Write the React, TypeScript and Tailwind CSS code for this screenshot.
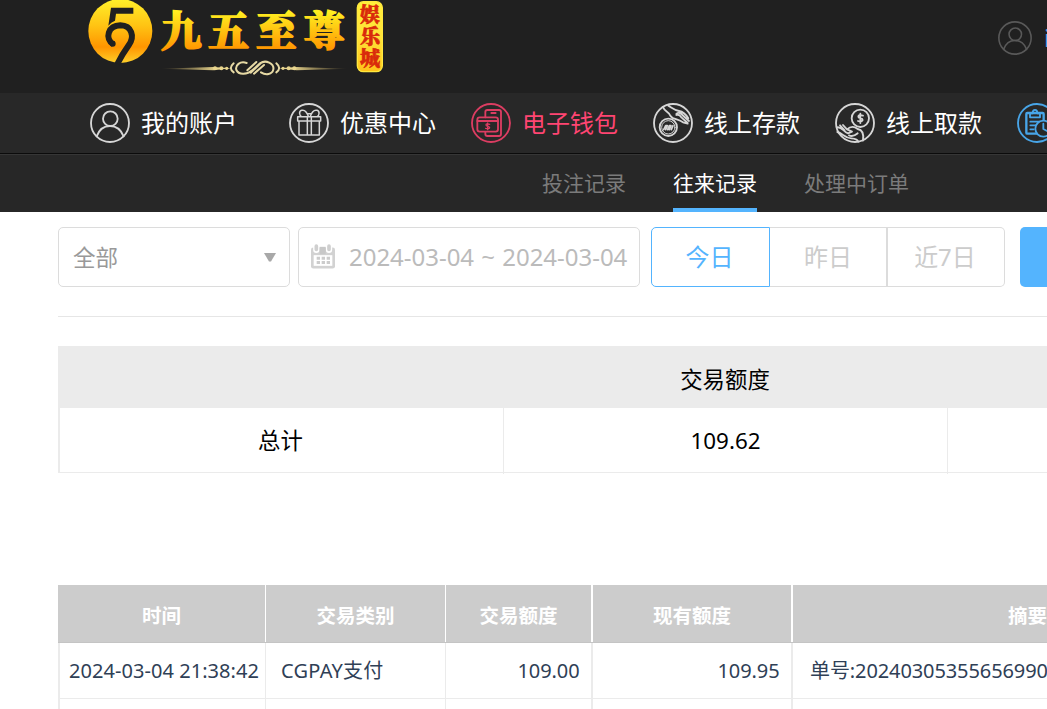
import React from "react";

const cjk = "font-['Noto_Sans','Noto_Sans_CJK_SC',sans-serif]";

type IconProps = { className?: string };

function Glyph({ className = "", children }: IconProps & { children: React.ReactNode }) {
  return (
    <svg
      viewBox="0 0 120 120"
      className={`shrink-0 ${className}`}
      fill="none"
      stroke="currentColor"
      strokeWidth="5.5"
      strokeLinecap="round"
      strokeLinejoin="round"
    >
      <circle cx="60" cy="60" r="57" />
      {children}
    </svg>
  );
}

const UserIcon = ({ className }: IconProps) => (
  <Glyph className={className}>
    <circle cx="61" cy="47" r="22" />
    <path d="M20 100 C28 78 43 69 60 69 C77 69 92 78 101 100" />
  </Glyph>
);

const GiftIcon = ({ className }: IconProps) => (
  <Glyph className={className}>
    <g strokeWidth="4.5">
      <path d="M26 41H95V54H26Z M30 54V96H91V54 M55 41V96 M67 41V96" />
      <path d="M58 40C54 28 46 20 38 22C28 25 32 38 37 40 M64 40C68 28 76 20 84 22C94 25 90 38 85 40 M55 32H67" />
    </g>
  </Glyph>
);

const WalletIcon = ({ className }: IconProps) => (
  <Glyph className={className}>
    <path d="M43 43V27Q43 21 49 21H84Q90 21 90 27V93Q90 99 84 99H49Q43 99 43 93V88 M61 30H74" />
    <rect x="19" y="43" width="62" height="43" rx="7" />
    <path d="M19 54H81" />
    <path strokeWidth="4" d="M56 64Q45 60 45 66C45 72 56 68 56 74Q55 79 44 76 M50 60V80" />
  </Glyph>
);

const DepositIcon = ({ className }: IconProps) => (
  <Glyph className={className}>
    <circle cx="46" cy="73" r="26" />
    <circle cx="46" cy="73" r="20" strokeWidth="3" />
    <path d="M32 80L38 68H43L38 80M44 80L49 68H54L49 80M55 80L60 68" strokeWidth="5" />
    <path d="M30 12C35 27 48 25 52 38C60 51 76 47 90 58L104 62M46 8C58 15 66 22 78 24C90 26 100 36 106 46M70 33C76 27 84 30 88 36L108 54M70 36C76 34 82 38 86 44L104 60" />
  </Glyph>
);

const WithdrawIcon = ({ className }: IconProps) => (
  <Glyph className={className}>
    <circle cx="76" cy="46" r="26" />
    <path d="M84 38Q70 34 70 41C70 47 83 44 83 51Q81 58 69 54 M76 32V60" />
    <path d="M6 73C23 71 24 86 39 91L51 86L36 79C47 69 57 69 68 78C79 80 88 87 84 113M15 67L29 82M24 66L36 79M7 87C23 91 29 105 49 106C60 107 68 108 70 116M42 97C54 103 63 95 68 91" />
  </Glyph>
);

const ReportIcon = ({ className }: IconProps) => (
  <Glyph className={className}>
    <rect x="28" y="30" width="52" height="62" rx="3" strokeWidth="7" />
    <path d="M39 43V31H47C47 17 61 17 61 31H69V43Z M40 56H68M40 67H58M40 79H50" />
    <circle cx="79" cy="77" r="24" fill="#282828" />
    <path d="M79 62V78L90 84" />
  </Glyph>
);

const CalendarIcon = () => (
  <svg viewBox="0 0 72 74" className="-mt-px h-[25px] w-[24px] shrink-0" fill="none">
    <rect x="0" y="10" width="72" height="63" rx="7" fill="#d2d2d2" />
    <path d="M8 33H64V65H8Z" fill="#fff" />
    <path d="M16 4V17M54 4V17" stroke="#fff" strokeWidth="19" strokeLinecap="round" />
    <path d="M16 6V16M54 6V16" stroke="#cfcfcf" strokeWidth="11" strokeLinecap="round" />
    <path d="M26 8H44V30H26Z" fill="#c8c8c8" />
    <path d="M17 42H57M17 55H57" stroke="#ccc" strokeWidth="9" strokeDasharray="10 5" />
  </svg>
);

function Logo() {
  const gold = [
    ["九", 243],
    ["五", 385],
    ["至", 528],
    ["尊", 672],
  ] as const;
  return (
    <svg viewBox="0 0 930 270" className="ml-[80px] h-[90px] w-[310px] shrink-0">
      <defs>
        <linearGradient id="gold" x1="0" y1="0" x2="0" y2="1">
          <stop offset="0" stopColor="#fff02a" />
          <stop offset=".42" stopColor="#ffc313" />
          <stop offset=".75" stopColor="#ff9500" />
          <stop offset="1" stopColor="#ffd02a" />
        </linearGradient>
        <linearGradient id="plate" x1="0" y1="0" x2="0" y2="1">
          <stop offset="0" stopColor="#fff03a" />
          <stop offset=".5" stopColor="#ffe238" />
          <stop offset="1" stopColor="#ffc21a" />
        </linearGradient>
        <linearGradient id="letters" gradientUnits="userSpaceOnUse" x1="0" y1="35" x2="0" y2="150">
          <stop offset="0" stopColor="#ffef20" />
          <stop offset="1" stopColor="#ff9500" />
        </linearGradient>
        <linearGradient id="rule" gradientUnits="userSpaceOnUse" x1="240" y1="0" x2="805" y2="0">
          <stop offset="0" stopColor="#c9ad60" stopOpacity="0" />
          <stop offset=".3" stopColor="#e8d58e" />
          <stop offset=".7" stopColor="#e8d58e" />
          <stop offset="1" stopColor="#c9ad60" stopOpacity="0" />
        </linearGradient>
      </defs>
      <circle cx="121" cy="93" r="96" fill="url(#gold)" />
      <path d="M93 23H160V41H108L105 62Q93 66 85 77Z" fill="#202020" />
      <path
        d="M100 133C73 115 84 77 121 76C156 77 164 110 147 134C134 152 122 172 112 192"
        fill="none"
        stroke="#202020"
        strokeWidth="18"
      />
      <circle cx="98" cy="131" r="9" fill="#202020" />
      <g
        fill="url(#letters)"
        stroke="url(#letters)"
        strokeWidth="5"
        className="font-['Noto_Serif_CJK_SC','Noto_Sans_CJK_SC',sans-serif] text-[122px] font-black"
      >
        {gold.map(([ch, x]) => (
          <text key={ch} x={x} y="137">{ch}</text>
        ))}
      </g>
      <path d="M240 206L400 201L455 205L400 211Z M805 206L650 201L595 205L650 211Z" fill="url(#rule)" />
      <g fill="none" stroke="#e6d9a4" strokeWidth="6" strokeLinecap="round">
        <path d="M500 189C480 182 465 196 469 210C475 224 500 226 517 211L540 190C557 178 583 190 580 208C577 224 557 226 543 217M502 211L529 186M512 218L542 190M522 221L552 195" />
        <path d="M461 190Q444 205 461 217M589 190Q606 205 589 217" />
      </g>
      <g fill="#e8d58e">
        <circle cx="405" cy="205" r="6" />
        <circle cx="424" cy="205" r="6" />
        <circle cx="440" cy="205" r="5" />
        <circle cx="609" cy="205" r="5" />
        <circle cx="626" cy="205" r="6" />
        <circle cx="643" cy="205" r="6" />
      </g>
      <rect x="832" y="5" width="75" height="210" rx="18" fill="url(#plate)" stroke="#ffe83e" strokeWidth="4" />
      <g
        fill="#d92a0b"
        stroke="#d92a0b"
        strokeWidth="2"
        className="font-['Noto_Serif_CJK_SC','Noto_Sans_CJK_SC',sans-serif] text-[60px] font-black"
      >
        <text x="840" y="66">娱</text>
        <text x="840" y="133">乐</text>
        <text x="840" y="199">城</text>
      </g>
    </svg>
  );
}

const nav = [
  { label: "我的账户", Icon: UserIcon, box: "mr-[52px] text-white", icon: "text-[#d6d6d6]" },
  { label: "优惠中心", Icon: GiftIcon, box: "mr-[35px] text-white", icon: "text-[#d6d6d6]" },
  { label: "电子钱包", Icon: WalletIcon, box: "mr-[35px] text-[#ff4572]", icon: "text-[#dc3d62]" },
  { label: "线上存款", Icon: DepositIcon, box: "mr-[35px] text-white", icon: "text-[#d6d6d6]" },
  { label: "线上取款", Icon: WithdrawIcon, box: "mr-[35px] text-white", icon: "text-[#d6d6d6]" },
  { label: "", Icon: ReportIcon, box: "text-[#48a5e8]", icon: "text-[#48a5e8]" },
];

const columns = [
  { title: "时间", value: "2024-03-04 21:38:42", cell: "w-[208px] border-r", body: "pl-[9px] border-l-2 tracking-[0.05px]" },
  { title: "交易类别", value: "CGPAY支付", cell: "w-[180px] border-r", body: "pl-[15px] tracking-[0.25px]" },
  { title: "交易额度", value: "109.00", cell: "w-[147px] border-r-2", body: "justify-end pr-[11.5px] tracking-[-0.1px]" },
  { title: "现有额度", value: "109.95", cell: "w-[200px] border-r-2", body: "justify-end pr-[11.5px] tracking-[-0.1px]" },
  { title: "摘要", value: "单号:20240305355656990", cell: "w-[469px]", body: "pl-[17px] tracking-[-0.1px]" },
];

export default function App() {
  return (
    <div className={`h-[709px] w-full overflow-hidden bg-white ${cjk}`}>
      <header className="flex h-[93px] items-start overflow-hidden bg-[#202020]">
        <Logo />
        <div className="ml-[608px] flex h-[76px] shrink-0 items-center">
          <UserIcon className="h-[34px] w-[34px] text-[#595959]" />
          <span className="ml-[12px] text-[24px] text-[#48a5e8]">i</span>
        </div>
      </header>

      <nav className="flex h-[60px] items-center overflow-hidden bg-[#282828] pl-[90px]">
        {nav.map(({ label, Icon, box, icon }, i) => (
          <a key={i} className={`flex shrink-0 items-center ${box}`}>
            <Icon className={`h-[40px] w-[40px] ${icon}`} />
            <span className={`text-[24px] leading-[40px] ${label ? "ml-[11px] w-[96px]" : ""}`}>{label}</span>
          </a>
        ))}
      </nav>

      <div className="flex h-[59px] gap-[47px] border-t border-[#0b0b0b] bg-[#272727] pl-[542px] text-[21px] text-[#7b7b7b] shadow-[inset_0_1px_0_#363636]">
        <a className="h-[58px] leading-[58px]">投注记录</a>
        <a className="h-[58px] border-b-4 border-[#54b4fe] leading-[58px] text-white">往来记录</a>
        <a className="h-[58px] leading-[58px]">处理中订单</a>
      </div>

      <main className="ml-[58px] w-[1204px]">
        <section className="flex h-[105px] border-b border-[#e6e6e6] pt-[15px]">
          <div className="flex h-[60px] w-[232px] items-center justify-between rounded-[5px] border border-[#dcdcdc] pr-[13px] pl-[14px] text-[22.5px] text-[#999]">
            <span className="pt-[2px]">全部</span>
            <svg viewBox="0 0 12 9" className="mt-px h-[9px] w-[12px]" fill="#a8a8a8">
              <path d="M0 0H12L7 8.5H5Z" />
            </svg>
          </div>
          <div className="ml-[8px] flex h-[60px] w-[342px] items-center rounded-[5px] border border-[#dcdcdc] pl-[12px] text-[24px] whitespace-nowrap text-[#bbb]">
            <CalendarIcon />
            <span className="ml-[14px] tracking-[-0.02px] [word-spacing:1px]">2024-03-04 ~ 2024-03-04</span>
          </div>
          <div className="ml-[11px] flex h-[60px] text-[24px] text-[#ccc]">
            <button className="w-[119px] rounded-l-[5px] border border-[#54b4fe] pr-[2px] text-[#54b4fe]">今日</button>
            <button className="w-[118px] border border-r-2 border-l-0 border-[#dcdcdc]">昨日</button>
            <button className="w-[117px] rounded-r-[5px] border border-l-0 border-[#dcdcdc] pr-[2px]">近7日</button>
          </div>
          <div className="ml-[15px] h-[60px] w-[110px] rounded-[5px] bg-[#54b4fe]" />
        </section>

        <section className="mt-[29px] w-[1334px] text-[22.4px] text-black">
          <div className="grid h-[62px] grid-cols-[446px_442px_446px] items-center bg-[#ebebeb] pt-[5px] text-center">
            <span />
            <span>交易额度</span>
            <span />
          </div>
          <div className="grid h-[65px] grid-cols-[444px_444px_444px] border-b border-l-2 border-[#ebebeb] text-center leading-[66px]">
            <span className="border-r border-[#ebebeb] pr-[2px]">总计</span>
            <span className="border-r border-[#ebebeb]">109.62</span>
            <span />
          </div>
        </section>

        <section className="mt-[112px] w-[1204px] whitespace-nowrap">
          <div className="flex h-[58px] border-b border-[#c4c4c4] bg-[#ccc] text-[19.5px] font-bold text-white">
            {columns.map((c) => (
              <div key={c.title} className={`flex shrink-0 items-center justify-center border-white pt-[4px] ${c.cell}`}>
                {c.title}
              </div>
            ))}
          </div>
          <div className="flex h-[56px] border-b border-[#ebebeb] text-[20px] text-[#2f4056]">
            {columns.map((c) => (
              <div key={c.title} className={`flex shrink-0 items-center border-[#ebebeb] ${c.cell} ${c.body}`}>
                {c.value}
              </div>
            ))}
          </div>
          <div className="flex h-[56px]">
            {columns.map((c) => (
              <div key={c.title} className={`shrink-0 border-[#ebebeb] ${c.cell} ${c.body}`} />
            ))}
          </div>
        </section>
      </main>
    </div>
  );
}
